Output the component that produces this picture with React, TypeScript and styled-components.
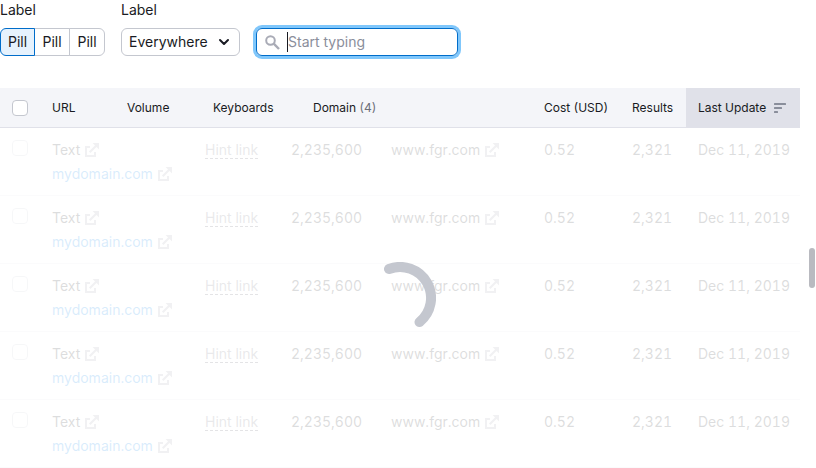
import React from "react";
import styled, { createGlobalStyle, css } from "styled-components";

const GlobalStyle = createGlobalStyle`
  *, *::before, *::after { box-sizing: border-box; }
  html, body { margin: 0; height: 100%; overflow: hidden; }
  body {
    background: #fff;
    color: #191b23;
    font-family: Inter, "Liberation Sans", sans-serif;
    font-size: 14px;
    line-height: 20px;
  }
  button, input, select { font: inherit; color: inherit; margin: 0; }
`;

const Page = styled.main`
  display: flex;
  flex-direction: column;
  gap: 32px;
`;

const Filters = styled.form`
  display: flex;
  align-items: flex-end;
  gap: 16px;
`;

const Field = styled.div`
  display: flex;
  flex-direction: column;
  gap: 8px;
`;

const FieldLabel = styled.label`
  line-height: 20px;
`;

const Pills = styled.div`
  display: flex;
`;

const Pill = styled.button<{ $active?: boolean }>`
  height: 28px;
  width: 36px;
  padding: 0;
  border: 1px solid #c4c7cf;
  background: #fff;
  position: relative;

  & + & { margin-left: -1px; }
  &:first-child { width: 35px; border-radius: 6px 0 0 6px; }
  &:last-child { border-radius: 0 6px 6px 0; }

  ${(p) =>
    p.$active &&
    css`
      z-index: 1;
      background: #e6f2fd;
      border-color: #006dca;
    `}
`;

const SelectBox = styled.div`
  display: grid;
  align-items: center;
  width: 119px;

  & > * { grid-area: 1 / 1; }
  & > svg { justify-self: end; margin-right: 10px; pointer-events: none; }
`;

const Select = styled.select`
  appearance: none;
  width: 100%;
  height: 28px;
  padding: 0 7px;
  border: 1px solid #c4c7cf;
  border-radius: 6px;
  background: #fff;
`;

const SearchBox = styled.label`
  display: flex;
  align-items: center;
  width: 202px;
  height: 28px;
  padding: 0 8px;
  border: 1px solid #006dca;
  border-radius: 6px;
  box-shadow: 0 0 0 3px #80c7fb;
`;

const Caret = styled.span`
  width: 1px;
  height: 20px;
  margin-left: 7px;
  background: #191b23;
`;

const SearchInput = styled.input`
  flex: 1;
  min-width: 0;
  padding: 0;
  border: 0;
  outline: 0;
  background: none;

  &::placeholder { color: #8a8e9b; opacity: 1; }
`;

const TableArea = styled.section`
  display: flex;
`;

const TableWrap = styled.div`
  flex: 1;
  min-width: 0;
  position: relative;
`;

const Table = styled.table`
  width: 100%;
  table-layout: fixed;
  border-collapse: separate;
  border-spacing: 0;
  font-variant-numeric: tabular-nums;
`;

const Col = styled.col<{ $w?: number }>`
  ${(p) => p.$w && `width: ${p.$w}px;`}
`;

const HeadCell = styled.th<{ $sorted?: boolean }>`
  height: 40px;
  padding: 0 0 0 12px;
  text-align: left;
  font-size: 12px;
  font-weight: 400;
  line-height: 16px;
  white-space: nowrap;
  background: ${(p) => (p.$sorted ? "#e0e1e9" : "#f4f5f9")};
  border-bottom: 1px solid #e0e1e9;
`;

const HeadContent = styled.span`
  display: flex;
  align-items: center;
  gap: 8px;
`;

const Count = styled.span`
  color: #6c6e79;
`;

const Cell = styled.td`
  height: 68px;
  padding: 12px 0 0 12px;
  vertical-align: top;
  white-space: nowrap;
  border-bottom: 1px solid #e0e1e9;
`;

const Line = styled.div`
  display: flex;
  align-items: center;
  gap: 5px;

  & + & { margin-top: 4px; }
`;

const DomainLink = styled.a`
  color: #007ee5;
  text-decoration: none;
`;

const HintLink = styled.button`
  display: block;
  margin-top: 2px;
  padding: 0;
  border: 0;
  border-bottom: 1px dashed #4c4e59;
  background: none;
  color: #6c6e79;
  line-height: 16px;
`;

const Checkbox = styled.input`
  appearance: none;
  display: block;
  width: 16px;
  height: 16px;
  border: 1px solid #c4c7cf;
  border-radius: 4px;
  background: #fff;
`;

const Loading = styled.div`
  position: absolute;
  inset: 40px 0 0;
  display: flex;
  align-items: center;
  justify-content: center;
  background: rgba(255, 255, 255, 0.85);
`;

const ScrollTrack = styled.div`
  width: 16px;
  padding: 160px 1px 0 9px;
`;

const ScrollThumb = styled.div`
  height: 40px;
  border-radius: 3px;
  background: #b9bac0;
`;

const ChevronIcon = () => (
  <svg width="12" height="8" viewBox="0 0 12 8" fill="none" aria-hidden="true">
    <path d="M2 2l4 4 4-4" stroke="#191b23" strokeWidth="2" strokeLinecap="round" strokeLinejoin="round" />
  </svg>
);

const SearchIcon = () => (
  <svg width="15" height="15" viewBox="0 0 15 15" fill="none" stroke="#a9abb6" strokeWidth="2" aria-hidden="true">
    <circle cx="5.5" cy="5.5" r="4.3" />
    <path d="M8.7 8.7L14 14" strokeWidth="2.4" />
  </svg>
);

const ExternalIcon = () => (
  <svg width="14" height="14" viewBox="0 0 14 14" fill="none" stroke="#a0a2ae" strokeWidth="2" aria-hidden="true">
    <path d="M5 4H1v9h9V9" />
    <path d="M4.7 9.3L12 2" strokeWidth="2.2" />
    <path d="M7.5 0H14v6.5z" fill="#a0a2ae" stroke="none" />
  </svg>
);

const SortIcon = () => (
  <svg width="12" height="10" viewBox="0 0 12 10" fill="#8a8e9b" aria-hidden="true">
    <rect width="12" height="2" rx="0.5" />
    <rect y="4" width="8" height="2" rx="0.5" />
    <rect y="8" width="4" height="2" rx="0.5" />
  </svg>
);

const Spinner = () => (
  <svg width="72" height="72" viewBox="-36 -36 72 72" fill="none" role="img" aria-label="Loading">
    <path d="M-11 -29A31 31 0 0 1 19.5 24.1" stroke="#c4c7cf" strokeWidth="10" strokeLinecap="round" />
  </svg>
);

const columns = [40, 75, 78, 8, 78, 22, 78, undefined, 88, 66, 114];
const rows = [1, 2, 3, 4, 5];

export default function App() {
  return (
    <Page>
      <GlobalStyle />
      <Filters>
        <Field>
          <FieldLabel as="span" id="pills-label">Label</FieldLabel>
          <Pills role="group" aria-labelledby="pills-label">
            <Pill type="button" $active aria-pressed="true">Pill</Pill>
            <Pill type="button">Pill</Pill>
            <Pill type="button">Pill</Pill>
          </Pills>
        </Field>
        <Field>
          <FieldLabel htmlFor="scope">Label</FieldLabel>
          <SelectBox>
            <Select id="scope">
              <option>Everywhere</option>
            </Select>
            <ChevronIcon />
          </SelectBox>
        </Field>
        <SearchBox>
          <SearchIcon />
          <Caret />
          <SearchInput type="text" aria-label="Search" placeholder="Start typing" />
        </SearchBox>
      </Filters>
      <TableArea>
        <TableWrap>
          <Table>
            <colgroup>
              {columns.map((w, i) => (
                <Col key={i} $w={w} />
              ))}
            </colgroup>
            <thead>
              <tr>
                <HeadCell><Checkbox type="checkbox" aria-label="Select all" /></HeadCell>
                <HeadCell>URL</HeadCell>
                <HeadCell colSpan={2}>Volume</HeadCell>
                <HeadCell colSpan={2}>Keyboards</HeadCell>
                <HeadCell colSpan={2}>Domain <Count>(4)</Count></HeadCell>
                <HeadCell>Cost (USD)</HeadCell>
                <HeadCell>Results</HeadCell>
                <HeadCell $sorted aria-sort="descending">
                  <HeadContent>Last Update <SortIcon /></HeadContent>
                </HeadCell>
              </tr>
            </thead>
            <tbody>
              {rows.map((id) => (
                <tr key={id}>
                  <Cell><Checkbox type="checkbox" aria-label={`Select row ${id}`} /></Cell>
                  <Cell colSpan={2}>
                    <Line>Text <ExternalIcon /></Line>
                    <Line><DomainLink href="#">mydomain.com</DomainLink> <ExternalIcon /></Line>
                  </Cell>
                  <Cell colSpan={2}><HintLink type="button">Hint link</HintLink></Cell>
                  <Cell colSpan={2}>2,235,600</Cell>
                  <Cell><Line>www.fgr.com <ExternalIcon /></Line></Cell>
                  <Cell>0.52</Cell>
                  <Cell>2,321</Cell>
                  <Cell>Dec 11, 2019</Cell>
                </tr>
              ))}
            </tbody>
          </Table>
          <Loading><Spinner /></Loading>
        </TableWrap>
        <ScrollTrack><ScrollThumb /></ScrollTrack>
      </TableArea>
    </Page>
  );
}
